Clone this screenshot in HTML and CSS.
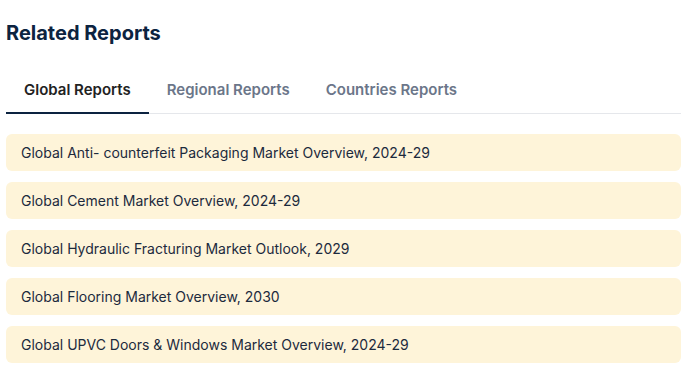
FILE: index.html
```html
<!DOCTYPE html>
<html lang="en">
  <head>
    <meta charset="UTF-8" />
    <meta name="viewport" content="width=device-width, initial-scale=1.0" />
    <title>Related Reports</title>
    <link rel="stylesheet" href="styles.css">
  </head>
  <body>
    <div class="related">
      <h2 class="related-title">Related Reports</h2>
      <ul class="tabs">
        <li class="tab active">Global Reports</li>
        <li class="tab">Regional Reports</li>
        <li class="tab">Countries Reports</li>
      </ul>
      <ul class="reports">
        <li class="report">Global Anti- counterfeit Packaging Market Overview, 2024-29</li>
        <li class="report">Global Cement Market Overview, 2024-29</li>
        <li class="report">Global Hydraulic Fracturing Market Outlook, 2029</li>
        <li class="report">Global Flooring Market Overview, 2030</li>
        <li class="report">Global UPVC Doors &amp; Windows Market Overview, 2024-29</li>
      </ul>
    </div>
  </body>
</html>
```

FILE: styles.css
```css
body {
  margin: 0;
  padding: 0;
  background: #fff;
  font-family: Inter, "Noto Sans", sans-serif;
}
.related {
  padding: 0 6px;
}
.related-title {
  margin: 0;
  padding-top: 20px;
  font-size: 20px;
  line-height: 26px;
  font-weight: 700;
  color: #0c2340;
}
.tabs {
  display: flex;
  margin: 20px 0 0;
  padding: 0;
  list-style: none;
  border-bottom: 1px solid #e5e7eb;
}
.tab {
  padding: 13px 18px 11px;
  font-size: 15px;
  line-height: 22px;
  font-weight: 600;
  color: #6b7689;
  margin-bottom: -1px;
  border-bottom: 2px solid transparent;
}
.tab.active {
  color: #222;
  border-bottom-color: #0c2340;
}
.reports {
  display: flex;
  flex-direction: column;
  gap: 11px;
  margin: 20px 0 0;
  padding: 0;
  list-style: none;
}
.report {
  padding: 9px 15px;
  background: #fef4d9;
  border-radius: 6px;
  font-size: 14px;
  line-height: 19px;
  color: #1c2a3d;
}
```
